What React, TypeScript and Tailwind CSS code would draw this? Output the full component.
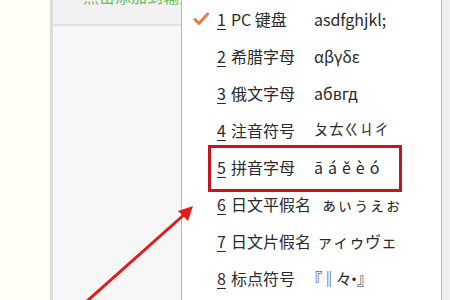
const items = [
  { n: '1', label: 'PC 键盘', sym: 'asdfghjkl;', checked: true, symClass: 'ml-[13px]' },
  { n: '2', label: '希腊字母', sym: 'αβγδε', symClass: 'ml-[13px]' },
  { n: '3', label: '俄文字母', sym: 'абвгд', symClass: 'ml-[13px]' },
  { n: '4', label: '注音符号', sym: 'ㄆㄊㄍㄐㄔ', symClass: 'ml-[13px] text-[15px]' },
  { n: '5', label: '拼音字母', sym: 'āáěèó', symClass: 'ml-[13px] tracking-[5px]' },
  { n: '6', label: '日文平假名', sym: 'ぁぃぅぇぉ', symClass: 'ml-[10px]' },
  { n: '7', label: '日文片假名', sym: 'ァィゥヴェ', symClass: 'ml-[6px]' },
  { n: '8', label: '标点符号', sym: '『‖々·』', symClass: 'ml-[13px] [font-feature-settings:"palt"] tracking-[-1px]' },
];

const font = 'font-["Microsoft_YaHei","Noto_Sans_CJK_SC",sans-serif]';

function Check() {
  return (
    <svg width="16" height="14" viewBox="0 0 16 14" className="ml-[11px]">
      <path d="M2 7.5 L6 11.5 L14.5 2" fill="none" stroke="#f4784a" strokeWidth={3} strokeLinecap="round" strokeLinejoin="round" />
    </svg>
  );
}

function MenuRow({ item }: { item: (typeof items)[number] }) {
  return (
    <div className="flex h-[37px] items-center text-[16px] text-[#2a2a2a]">
      <div className="flex w-[35px] shrink-0 items-center">{item.checked && <Check />}</div>
      <span className="underline underline-offset-[3px] decoration-1">{item.n}</span>
      <span className="ml-[5px] min-w-[70px]">{item.label}</span>
      <span className={`whitespace-pre ${item.symClass}`}>{item.sym}</span>
    </div>
  );
}

export default function App() {
  return (
    <div className={`relative flex h-[300px] w-[450px] overflow-hidden bg-white ${font}`}>
      {/* cream page edge */}
      <div className="w-[50px] shrink-0 bg-[#fffdf5]" />

      {/* side panel */}
      <div className="flex w-[131px] shrink-0 flex-col border-l-[3px] border-[#dcdcdc] bg-[#f7f7f7]">
        <div className="h-[26px] overflow-hidden border-b-2 border-[#e2e2e2] bg-[#f2f2f2]">
          <div className="-mt-[12px] ml-[30px] whitespace-nowrap text-[16px] leading-[16px] text-[#69c04c]">
            点击添加到输入法工具栏
          </div>
        </div>
        <div className="flex-1" />
      </div>

      {/* dropdown menu */}
      <div className="w-[261px] shrink-0 border-x border-[#b9b9b9] bg-white">
        {items.map((it) => (
          <MenuRow key={it.n} item={it} />
        ))}
      </div>

      <div className="flex-1 bg-[#efefef]" />

      {/* annotation: highlight box */}
      <div className="absolute left-[208px] top-[145px] h-[47px] w-[194px] border-[3px] border-[#c6161d]" />

      {/* annotation: arrow */}
      <svg className="absolute left-0 top-0" width="450" height="300" viewBox="0 0 450 300">
        <line x1="86" y1="302" x2="186" y2="213" stroke="#e31b1b" strokeWidth={3} strokeLinecap="round" />
        <path d="M193 206 L178 211 L188 221 Z" fill="#e31b1b" />
      </svg>
    </div>
  );
}
